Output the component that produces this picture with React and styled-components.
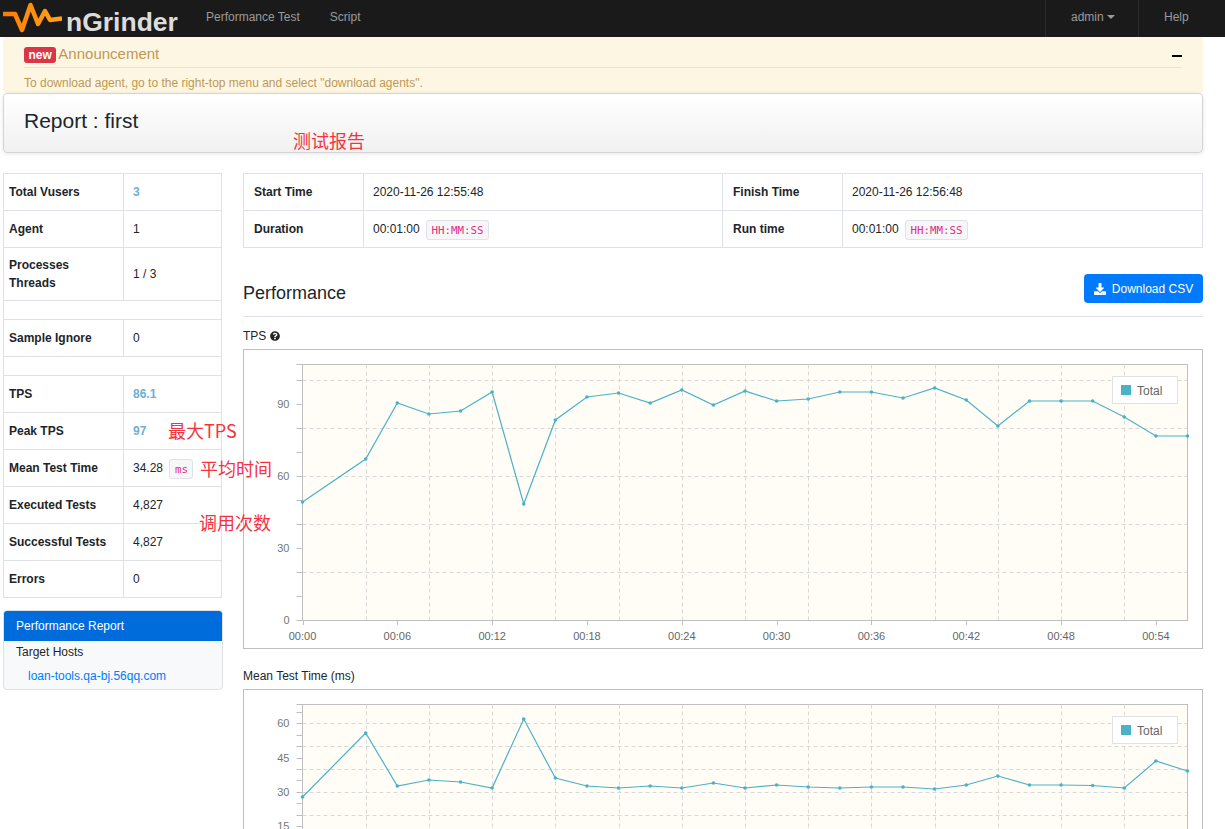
import React from "react";
import styled, { createGlobalStyle } from "styled-components";
import { FaDownload, FaQuestionCircle } from "react-icons/fa";

const GlobalStyle = createGlobalStyle`
  html, body {
    margin: 0;
    height: 829px;
    overflow: hidden;
    background: #fff;
    color: #212529;
    font-family: "Liberation Sans", Arial, sans-serif;
    font-size: 12px;
  }
`;

const Navbar = styled.div`
  height: 37px;
  background: #1a1a1a;
  display: flex;
  align-items: center;
`;

const Brand = styled.div`
  width: 206px;
  height: 37px;
  display: flex;
  align-items: center;
  flex-shrink: 0;
`;

const BrandName = styled.span`
  font-size: 26.5px;
  font-weight: bold;
  color: #dcdcdc;
  margin-left: 4px;
  margin-top: 8px;
`;

const NavLink = styled.span`
  color: #9a9a9a;
  font-size: 12px;
  margin-right: 30px;
  padding-bottom: 4px;
`;

const NavRight = styled.div`
  margin-left: auto;
  display: flex;
  height: 37px;
`;

const NavCell = styled.div`
  width: ${(p) => p.$width}px;
  box-sizing: border-box;
  display: flex;
  align-items: center;
  padding: 0 0 4px 25px;
  color: #9a9a9a;
  font-size: 12px;
  border-left: 1px solid #2b2b2b;
`;

const Caret = styled.i`
  width: 0;
  height: 0;
  margin-left: 3px;
  border-left: 4px solid transparent;
  border-right: 4px solid transparent;
  border-top: 4px solid #9a9a9a;
`;

const Page = styled.div`
  padding: 0 22px 0 3px;
  position: relative;
`;

const Announcement = styled.div`
  height: 56px;
  background: #fdf6e3;
  border-radius: 0 0 4px 4px;
  padding: 0 21px;
  box-sizing: border-box;
  color: #c09853;
`;

const AnnounceHead = styled.div`
  height: 31px;
  box-sizing: border-box;
  padding-top: 6px;
  display: flex;
  align-items: center;
  border-bottom: 1px solid #e6e3d8;
`;

const NewBadge = styled.span`
  background: #dc3545;
  color: #fff;
  font-size: 12px;
  font-weight: bold;
  line-height: 16px;
  padding: 0 4.5px;
  border-radius: 3px;
  margin-right: 2px;
`;

const AnnounceTitle = styled.span`
  font-size: 15px;
  margin-top: -3px;
`;

const Collapse = styled.span`
  margin-left: auto;
  width: 10px;
  height: 2px;
  background: #000;
  margin-top: 2px;
`;

const AnnounceText = styled.div`
  font-size: 12px;
  margin-top: 8px;
`;

const ReportHead = styled.div`
  height: 60px;
  box-sizing: border-box;
  border: 1px solid #d4d4d4;
  border-radius: 4px;
  background: linear-gradient(#ffffff, #f1f1f1);
  box-shadow: 0 1px 4px rgba(0, 0, 0, 0.1);
  padding: 0 20px 4px;
  display: flex;
  align-items: center;
  font-size: 21px;
  margin-bottom: 20px;
`;

const Columns = styled.div`
  display: grid;
  grid-template-columns: 219px 960px;
  column-gap: 21px;
  align-items: start;
`;

const Table = styled.table`
  width: 100%;
  table-layout: fixed;
  border-collapse: collapse;
  border: 1px solid #dee2e6;
  font-size: 12px;

  td, th {
    border: 1px solid #dee2e6;
    height: 37px;
    padding: 0 9px;
    text-align: left;
    box-sizing: border-box;
  }
  th {
    padding: 0 6px 0 ${(p) => p.$labelPad}px;
    line-height: 18px;
  }
`;

const Spacer = styled.td`
  && {
    height: 19px;
    padding: 0;
  }
`;

const Tall = styled.tr`
  th, td {
    height: 53px;
  }
`;

const Accent = styled.strong`
  color: #6cb0d3;
`;

const Unit = styled.code`
  font-family: "DejaVu Sans Mono", "Liberation Mono", monospace;
  font-size: 10.8px;
  color: #dd2f80;
  background: #f7f7f9;
  border: 1px solid #e1e1e8;
  border-radius: 3px;
  padding: 2.5px 4.5px;
  margin-left: 3px;
`;

const SideNav = styled.div`
  margin: 12px -1px 0 0;
  border: 1px solid #dee2e6;
  border-radius: 4px;
  background: #f8f9fa;
  overflow: hidden;
  height: 80px;
  box-sizing: border-box;
`;

const SideActive = styled.div`
  height: 30px;
  line-height: 30px;
  background: #006bdb;
  color: #fff;
  padding-left: 12px;
`;

const SideItem = styled.div`
  line-height: ${(p) => p.$line}px;
  padding-left: ${(p) => p.$indent}px;
  color: ${(p) => p.$color || "#212529"};
`;

const SectionHead = styled.div`
  margin-top: 26px;
  height: 43px;
  box-sizing: border-box;
  border-bottom: 1px solid #dee2e6;
  display: flex;
  align-items: flex-start;
  justify-content: space-between;
`;

const SectionTitle = styled.div`
  font-size: 18px;
  line-height: 38px;
`;

const DownloadButton = styled.button`
  width: 119px;
  height: 29px;
  border: none;
  border-radius: 4px;
  background: #007bff;
  color: #fff;
  font-family: inherit;
  font-size: 12px;
  display: flex;
  align-items: center;
  justify-content: center;
  gap: 6px;
`;

const ChartLabel = styled.div`
  display: flex;
  align-items: center;
  gap: 4px;
  height: 32px;
  font-size: 12px;
  padding-top: 6px;
  box-sizing: border-box;
`;

const ChartBox = styled.div`
  position: relative;
  width: 960px;
  height: 300px;
  box-sizing: border-box;
  border: 1px solid #bfbfbf;
  margin-bottom: 8px;

  svg {
    display: block;
  }
`;

const Legend = styled.div`
  position: absolute;
  top: 26px;
  right: 24px;
  width: 66px;
  height: 28px;
  box-sizing: border-box;
  background: #fff;
  border: 1px solid #e2e2e2;
  display: flex;
  align-items: center;
  padding: 2px 0 0 8px;
  gap: 6px;
  font-size: 12px;
  color: #666;
`;

const Swatch = styled.i`
  width: 10px;
  height: 10px;
  background: #4bb2c5;
  margin-top: -3px;
`;

const Note = styled.span`
  position: absolute;
  left: ${(p) => p.$x}px;
  top: ${(p) => p.$y}px;
  color: #f5333f;
  font-size: 18px;
  line-height: 24px;
  white-space: nowrap;
  font-family: "Noto Sans CJK SC", "Noto Sans", sans-serif;
`;

// y pixel of every sample, relative to the chart box, one per 2 seconds from 00:00 (00:02 is missing in the data)
const tpsPoints = [153, null, 110, 54, 65, 62, 43, 155, 71, 48, 44, 54, 41, 56, 42, 52, 50, 43, 43, 49, 39, 51, 77, 52, 52, 52, 68, 87, 87];
const meanPoints = [108, null, 44, 97, 91, 93, 99, 30, 89, 97, 99, 97, 99, 94, 99, 96, 98, 99, 98, 98, 100, 96, 87, 96, 96, 96.5, 99, 72, 82];

const tpsAxis = {
  bottom: 271,
  grid: [31, 79, 127, 175, 223],
  ticks: [15, 31, 55, 79, 103, 127, 151, 175, 199, 223, 247, 271],
  labels: [["90", 55], ["60", 127], ["30", 199], ["0", 271]],
};
const meanAxis = {
  bottom: 400,
  grid: [34, 57, 80, 103, 126],
  ticks: [15, 23, 34, 46, 57, 69, 80, 91, 103, 114, 126, 137, 149, 160],
  labels: [["60", 34], ["45", 69], ["30", 103], ["15", 137]],
};

const PLOT_LEFT = 58.5;
const PLOT_RIGHT = 943.5;
const PLOT_TOP = 15.5;
const STEP = (PLOT_RIGHT - PLOT_LEFT) / 28;

const pad = (n) => String(n).padStart(2, "0");

const Chart = ({ points, axis }) => {
  const samples = points
    .map((y, i) => (y === null ? null : [PLOT_LEFT + i * STEP, y]))
    .filter(Boolean);
  const verticals = [];
  for (let i = 2; i * STEP < PLOT_RIGHT - PLOT_LEFT; i += 2) verticals.push(PLOT_LEFT + i * STEP);
  const labels = [];
  for (let i = 0; i <= 27; i += 3) labels.push(i);

  return (
    <ChartBox>
      <svg width="958" height="298" viewBox="0 1 958 298" fontFamily="Liberation Sans, Arial, sans-serif" fontSize="11">
        <rect x={PLOT_LEFT} y={PLOT_TOP} width={PLOT_RIGHT - PLOT_LEFT} height={axis.bottom + 0.5 - PLOT_TOP} fill="#fffdf6" stroke="#bfbfbf" />
        {axis.grid.map((y) => (
          <line key={y} x1={PLOT_LEFT} x2={PLOT_RIGHT} y1={y + 0.5} y2={y + 0.5} stroke="#d8d8d8" strokeDasharray="4 3" />
        ))}
        {verticals.map((x) => (
          <line key={x} x1={Math.round(x) + 0.5} x2={Math.round(x) + 0.5} y1={PLOT_TOP} y2={axis.bottom} stroke="#d8d8d8" strokeDasharray="4 3" />
        ))}
        {axis.ticks.map((y) => (
          <line key={y} x1={PLOT_LEFT - 6} x2={PLOT_LEFT} y1={y + 0.5} y2={y + 0.5} stroke="#bfbfbf" />
        ))}
        {axis.labels.map(([text, y]) => (
          <text key={text} x={PLOT_LEFT - 13} y={y + 4} textAnchor="end" fill="#777">{text}</text>
        ))}
        {labels.map((i) => (
          <g key={i}>
            <line x1={Math.round(PLOT_LEFT + i * STEP) + 0.5} x2={Math.round(PLOT_LEFT + i * STEP) + 0.5} y1={axis.bottom} y2={axis.bottom + 5} stroke="#bfbfbf" />
            <text x={PLOT_LEFT + i * STEP} y={axis.bottom + 20} textAnchor="middle" fill="#666">{`00:${pad(i * 2)}`}</text>
          </g>
        ))}
        <polyline points={samples.map((s) => s.join(",")).join(" ")} fill="none" stroke="#4bb2c5" strokeWidth="1.2" />
        {samples.map(([x, y]) => (
          <circle key={x} cx={x} cy={y} r="1.8" fill="#4bb2c5" />
        ))}
      </svg>
      <Legend><Swatch />Total</Legend>
    </ChartBox>
  );
};

const Logo = () => (
  <svg width="62" height="33" viewBox="0 0 62 33">
    <defs>
      <linearGradient id="wave" x1="0" x2="1" y1="0" y2="0">
        <stop offset="0" stopColor="#ff7a00" />
        <stop offset="1" stopColor="#ffa51a" />
      </linearGradient>
    </defs>
    <path d="M3 12 H15 L22 28 L30.500 3 L38 22 L45 9 L50 18 L62 16.500" fill="none" stroke="url(#wave)" strokeWidth="4.500" strokeLinejoin="round" />
  </svg>
);

export default function App() {
  return (
    <>
      <GlobalStyle />
      <Navbar>
        <Brand>
          <Logo />
          <BrandName>nGrinder</BrandName>
        </Brand>
        <NavLink>Performance Test</NavLink>
        <NavLink>Script</NavLink>
        <NavRight>
          <NavCell $width={93}>admin<Caret /></NavCell>
          <NavCell $width={87}>Help</NavCell>
        </NavRight>
      </Navbar>
      <Page>
        <Announcement>
          <AnnounceHead>
            <NewBadge>new</NewBadge>
            <AnnounceTitle>Announcement</AnnounceTitle>
            <Collapse />
          </AnnounceHead>
          <AnnounceText>To download agent, go to the right-top menu and select "download agents".</AnnounceText>
        </Announcement>
        <ReportHead>Report : first</ReportHead>
        <Columns>
          <div>
            <Table $labelPad={5}>
              <colgroup>
                <col width="120" />
                <col />
              </colgroup>
              <tbody>
                <tr><th>Total Vusers</th><td><Accent>3</Accent></td></tr>
                <tr><th>Agent</th><td>1</td></tr>
                <Tall><th>Processes<br />Threads</th><td>1 / 3</td></Tall>
                <tr><Spacer colSpan="2" /></tr>
                <tr><th>Sample Ignore</th><td>0</td></tr>
                <tr><Spacer colSpan="2" /></tr>
                <tr><th>TPS</th><td><Accent>86.1</Accent></td></tr>
                <tr><th>Peak TPS</th><td><Accent>97</Accent></td></tr>
                <tr><th>Mean Test Time</th><td>34.28 <Unit>ms</Unit></td></tr>
                <tr><th>Executed Tests</th><td>4,827</td></tr>
                <tr><th>Successful Tests</th><td>4,827</td></tr>
                <tr><th>Errors</th><td>0</td></tr>
              </tbody>
            </Table>
            <SideNav>
              <SideActive>Performance Report</SideActive>
              <SideItem $indent={12} $line={23}>Target Hosts</SideItem>
              <SideItem $indent={24} $line={25} $color="#007bff">loan-tools.qa-bj.56qq.com</SideItem>
            </SideNav>
          </div>
          <div>
            <Table $labelPad={10}>
              <colgroup>
                <col width="120" />
                <col width="359" />
                <col width="120" />
                <col />
              </colgroup>
              <tbody>
                <tr>
                  <th>Start Time</th>
                  <td>2020-11-26 12:55:48</td>
                  <th>Finish Time</th>
                  <td>2020-11-26 12:56:48</td>
                </tr>
                <tr>
                  <th>Duration</th>
                  <td>00:01:00 <Unit>HH:MM:SS</Unit></td>
                  <th>Run time</th>
                  <td>00:01:00 <Unit>HH:MM:SS</Unit></td>
                </tr>
              </tbody>
            </Table>
            <SectionHead>
              <SectionTitle>Performance</SectionTitle>
              <DownloadButton><FaDownload size={12} />Download CSV</DownloadButton>
            </SectionHead>
            <ChartLabel>TPS <FaQuestionCircle size={10} /></ChartLabel>
            <Chart points={tpsPoints} axis={tpsAxis} />
            <ChartLabel>Mean Test Time (ms)</ChartLabel>
            <Chart points={meanPoints} axis={meanAxis} />
          </div>
        </Columns>
        <Note $x={293} $y={91}>测试报告</Note>
        <Note $x={168} $y={381}>最大TPS</Note>
        <Note $x={200} $y={419}>平均时间</Note>
        <Note $x={199} $y={473}>调用次数</Note>
      </Page>
    </>
  );
}
